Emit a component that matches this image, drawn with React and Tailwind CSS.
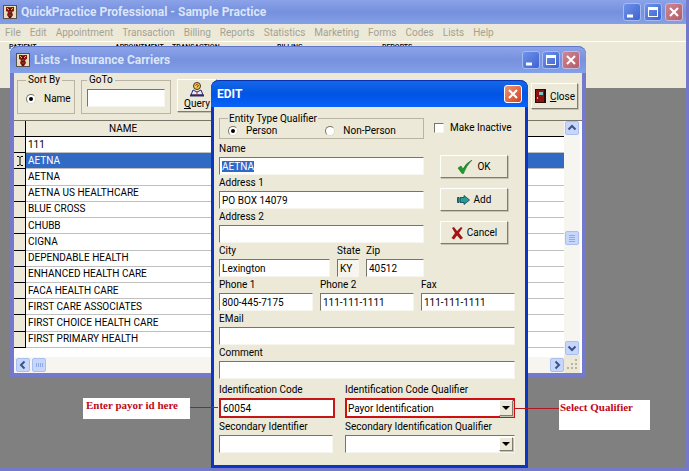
import React, { useEffect, useRef, useState } from "react";

const menuItems = [
  "File",
  "Edit",
  "Appointment",
  "Transaction",
  "Billing",
  "Reports",
  "Statistics",
  "Marketing",
  "Forms",
  "Codes",
  "Lists",
  "Help",
];

const carriers = [
  "111",
  "AETNA",
  "AETNA",
  "AETNA US HEALTHCARE",
  "BLUE CROSS",
  "CHUBB",
  "CIGNA",
  "DEPENDABLE HEALTH",
  "ENHANCED HEALTH CARE",
  "FACA HEALTH CARE",
  "FIRST CARE ASSOCIATES",
  "FIRST CHOICE HEALTH CARE",
  "FIRST PRIMARY HEALTH",
];

const sunken =
  "border border-t-[#77756a] border-l-[#77756a] border-r-[#f7f6ee] border-b-[#f7f6ee] bg-white";
const raised =
  "border border-t-white border-l-white border-r-[#807d6e] border-b-[#807d6e] bg-[#ece9d8] shadow-[1px_1px_0_#c5c2b2]";

function AppIcon() {
  return (
    <svg viewBox="0 0 14 14" className="h-3.5 w-3.5 shrink-0">
      <rect width="14" height="14" fill="#55504a" />
      <rect x="1" y="1" width="12" height="12" fill="#e8dcc0" />
      <path d="M3 2h3l1 1 1-1h3v4L9 7l1 3-2 3H6l-2-3 1-3-2-1z" fill="#8c1410" />
      <path d="M4 3l2 2M10 3L8 5M6 7h2M6 10h2" stroke="#e8b83c" />
      <path d="M7 2v11" stroke="#2a1210" />
    </svg>
  );
}

function CaptionButton({ kind, active }) {
  const isClose = kind === "Close";
  let color = "bg-linear-to-br from-[#6e93ea] to-[#3f62cf] border-[#a5baf0]";
  if (isClose) {
    color = active
      ? "bg-linear-to-br from-[#ee9272] to-[#d0401c] border-white"
      : "bg-linear-to-br from-[#cc8693] to-[#b45c68] border-[#c9b8dc]";
  }
  return (
    <button
      type="button"
      aria-label={kind}
      className={`flex h-[18px] w-[18px] items-center justify-center rounded-[3px] border ${color}`}
    >
      <svg viewBox="0 0 16 16" className="h-4 w-4" fill="none" stroke="white">
        {kind === "Minimize" && <path d="M3 12h6" strokeWidth="3" />}
        {kind === "Maximize" && (
          <>
            <rect x="3.5" y="3.5" width="9" height="9" />
            <path d="M3 4.5h10" strokeWidth="3" />
          </>
        )}
        {isClose && <path d="M4 4l8 8M12 4l-8 8" strokeWidth="2" />}
      </svg>
    </button>
  );
}

function ScrollButton({ label, d, thin }) {
  return (
    <button
      type="button"
      aria-label={label}
      className="flex h-3.5 w-3.5 shrink-0 items-center justify-center rounded-[2px] border border-[#a9bff0] bg-[#c6d6fc]"
    >
      <svg viewBox="0 0 10 10" className="h-2.5 w-2.5">
        <path
          d={d}
          fill="none"
          stroke={thin ? "#8fa9e8" : "#3f5484"}
          strokeWidth={thin ? 1 : 2}
        />
      </svg>
    </button>
  );
}

function Radio({ label, name, checked, onChange }) {
  return (
    <label className="flex items-center gap-2">
      <input
        type="radio"
        name={name}
        checked={checked}
        onChange={onChange}
        className="flex h-2.5 w-2.5 shrink-0 appearance-none items-center justify-center rounded-full border border-t-[#77756a] border-r-[#dedbc9] border-b-[#dedbc9] border-l-[#77756a] bg-white checked:before:h-1 checked:before:w-1 checked:before:rounded-full checked:before:bg-black"
      />
      {label}
    </label>
  );
}

function Field({ label, id, value, className, inputClass, inputRef }) {
  return (
    <div className={`flex flex-col ${className ?? ""}`}>
      <label htmlFor={id} className="h-4 leading-4 whitespace-nowrap">
        {label}
      </label>
      <input
        id={id}
        ref={inputRef}
        type="text"
        defaultValue={value}
        className={`w-full px-0.5 caret-transparent outline-none selection:bg-[#316ac5] selection:text-white ${
          inputClass ?? `h-[18px] ${sunken}`
        }`}
      />
    </div>
  );
}

function SelectField({ label, id, options, selectClass }) {
  return (
    <div className="flex flex-1 flex-col">
      <label htmlFor={id} className="h-4 leading-4 whitespace-nowrap">
        {label}
      </label>
      <div className="relative">
        <select
          id={id}
          className={`block w-full appearance-none px-px outline-none ${selectClass}`}
        >
          {options.map((option) => (
            <option key={option}>{option}</option>
          ))}
        </select>
        <span
          className={`pointer-events-none absolute inset-y-0.5 right-0.5 flex w-3.5 items-center justify-center ${raised}`}
        >
          <svg viewBox="0 0 8 4" className="h-1 w-2">
            <path d="M0 0h8L4 4z" fill="black" />
          </svg>
        </span>
      </div>
    </div>
  );
}

function ActionButton({ label, children }) {
  return (
    <button
      type="button"
      className={`flex h-[23px] w-[68px] items-center justify-center gap-1 ${raised}`}
    >
      {children}
      {label}
    </button>
  );
}

function CarrierList() {
  const [sortBy, setSortBy] = useState("Name");

  return (
    <section className="absolute top-[46px] left-2.5 flex h-[331px] w-[576px] flex-col rounded-t-lg border-4 border-t-0 border-[#7479cc] bg-[#ece9d8]">
      <header className="-mx-1 flex h-[27px] shrink-0 items-center gap-1 rounded-t-lg border-t border-[#6478c8] bg-linear-to-b from-[#8ba3e8] via-[#7791de] to-[#84a0e6] px-1.5">
        <AppIcon />
        <h2 className="flex-1 font-[Roboto,sans-serif] text-[12px] font-bold text-[#dbe5fa]">
          Lists - Insurance Carriers
        </h2>
        <div className="flex gap-0.5">
          <CaptionButton kind="Minimize" />
          <CaptionButton kind="Maximize" />
          <CaptionButton kind="Close" />
        </div>
      </header>

      <div className="flex h-[47px] shrink-0 items-start gap-1.5 pr-1 pl-[3px]">
        <fieldset className="h-[41px] w-[58px] min-w-0 border border-[#b9b5a2] px-2">
          <legend className="px-0.5 leading-[14px]">Sort By</legend>
          <div className="pt-1">
            <Radio
              label="Name"
              name="sort"
              checked={sortBy === "Name"}
              onChange={() => setSortBy("Name")}
            />
          </div>
        </fieldset>
        <fieldset className="h-[41px] w-[90px] min-w-0 border border-[#b9b5a2] px-[5px]">
          <legend className="px-0.5 leading-[14px]">GoTo</legend>
          <input
            type="text"
            aria-label="GoTo"
            className={`mt-0.5 block h-[18px] w-full ${sunken}`}
          />
        </fieldset>
        <button
          type="button"
          className={`mt-1.5 flex h-[33px] w-10 flex-col items-center justify-end ${raised}`}
        >
          <svg viewBox="0 0 16 15" className="h-[15px] w-4">
            <circle cx="8" cy="4" r="3.5" fill="#f2cf52" stroke="#3a3020" />
            <path d="M6.500 3.500q1.500-2 3 0L8 5.500" fill="none" stroke="#a02020" />
            <path d="M2 13l2-5 4 2 4-2 2 5z" fill="#e8e8f4" stroke="#28286c" />
            <path d="M1 13.500h14" stroke="#28286c" strokeWidth="2" />
            <path d="M8 9v4" stroke="#c03030" />
          </svg>
          <span className="leading-[14px]">
            <u>Q</u>uery
          </span>
        </button>
        <button
          type="button"
          className={`mt-2.5 ml-auto flex h-[26px] w-[47px] items-center justify-end gap-1 pr-0.5 ${raised}`}
        >
          <svg viewBox="0 0 11 14" className="h-3.5 w-[11px]">
            <rect width="11" height="14" fill="#2a0a08" />
            <rect x="1" y="1" width="8" height="12" fill="#8c1410" />
            <rect x="4" y="3" width="4" height="3" fill="#7cc4c8" />
            <rect x="2" y="8" width="1" height="2" fill="#e8c040" />
          </svg>
          <span>
            <u>C</u>lose
          </span>
        </button>
      </div>

      <div className="flex min-h-0 flex-1 border-t border-[#77756a] bg-white pr-0.5">
        <div className="flex flex-1 flex-col">
          <table className="h-[227px] w-full table-fixed border-separate border-spacing-0">
            <colgroup>
              <col className="w-3" />
              <col className="w-[194px]" />
              <col />
            </colgroup>
            <thead>
              <tr className="h-4 bg-[#ece9d8]">
                <th className="border-r border-b border-black p-0" />
                <th className="border-b border-black p-0 text-center leading-[14px] font-normal">
                  NAME
                </th>
                <th className="border-b border-black p-0" />
              </tr>
            </thead>
            <tbody>
              {carriers.map((carrier, i) => (
                <tr key={i} className={i === 1 ? "bg-[#316ac5] text-white" : ""}>
                  <td className="border-r border-b border-black bg-[#ece9d8] p-0 text-black">
                    {i === 1 && (
                      <svg viewBox="0 0 8 12" className="mx-auto h-3 w-2">
                        <path
                          d="M1 1.500h2l1 1 1-1h2M4 2v8M1 10.500h2l1-1 1 1h2"
                          fill="none"
                          stroke="black"
                        />
                      </svg>
                    )}
                  </td>
                  <td className="border-b border-[#c0c0c0] p-0 pl-0.5 leading-[14px] whitespace-nowrap">
                    {carrier}
                  </td>
                  <td className="border-b border-[#c0c0c0] p-0" />
                </tr>
              ))}
            </tbody>
          </table>
          <div className="mt-auto flex h-4 items-center gap-0.5 bg-[#f6f5f0] pl-0.5">
            <ScrollButton label="Scroll left" d="M6.500 1.500L3 5l3.500 3.500" />
            <ScrollButton label="Scroll thumb" d="M2.500 3v4M4.500 3v4M6.500 3v4M8.500 3v4" thin />
            <div className="flex-1" />
            <ScrollButton label="Scroll right" d="M3.500 1.500L7 5 3.500 8.500" />
          </div>
        </div>
        <div className="flex w-4 flex-col items-center bg-[#f6f5f0]">
          <ScrollButton label="Scroll up" d="M1.500 6.500L5 3l3.500 3.500" />
          <div className="flex-1" />
          <ScrollButton label="Scroll position" d="M2 2.500h6M2 4.500h6M2 6.500h6M2 8.500h6" thin />
          <div className="flex-1" />
          <ScrollButton label="Scroll down" d="M1.500 3.500L5 7l3.500-3.500" />
          <svg viewBox="0 0 16 18" className="h-[18px] w-4 bg-[#ece9d8]">
            <path
              d="M11 5h2M7 9h2M11 9h2M3 13h2M7 13h2M11 13h2"
              stroke="#b8b49c"
              strokeWidth="2"
            />
          </svg>
        </div>
      </div>
    </section>
  );
}

function EditDialog() {
  const [entityType, setEntityType] = useState("Person");
  const nameInput = useRef();

  useEffect(() => {
    nameInput.current.focus();
    nameInput.current.select();
  }, []);

  return (
    <form className="absolute top-20 left-[211px] flex h-[388px] w-[317px] flex-col rounded-t-lg border-[3px] border-t-0 border-[#0a36c0] bg-[#ece9d8]">
      <header className="-mx-[3px] flex h-[27px] shrink-0 items-center rounded-t-lg border-t border-[#0831b0] bg-linear-to-b from-[#1668e8] via-[#0054e3] to-[#0b62fa] px-1.5">
        <h2 className="flex-1 font-[Roboto,sans-serif] text-[12px] font-bold text-white">
          EDIT
        </h2>
        <CaptionButton kind="Close" active />
      </header>

      <div className="flex flex-col px-[5px] pt-[5px]">
        <div className="flex items-end gap-2.5">
          <fieldset className="h-[27px] w-[205px] border border-[#b9b5a2] px-2">
            <legend className="px-px leading-[13px]">Entity Type Qualifier</legend>
            <div className="flex gap-12 leading-[11px]">
              <Radio
                label="Person"
                name="entity"
                checked={entityType === "Person"}
                onChange={() => setEntityType("Person")}
              />
              <Radio
                label="Non-Person"
                name="entity"
                checked={entityType === "Non-Person"}
                onChange={() => setEntityType("Non-Person")}
              />
            </div>
          </fieldset>
          <label className="mb-1 flex items-center gap-1.5 whitespace-nowrap">
            <input
              type="checkbox"
              className={`h-2.5 w-2.5 appearance-none checked:bg-[#316ac5] ${sunken}`}
            />
            Make Inactive
          </label>
        </div>

        <div className="mt-0.5 flex gap-4">
          <div className="w-[205px]">
            <Field label="Name" id="name" value="AETNA" inputRef={nameInput} />
            <Field label="Address 1" id="address1" value="PO BOX 14079" />
            <Field label="Address 2" id="address2" />
            <div className="flex gap-[7px]">
              <Field label="City" id="city" value="Lexington" className="w-[111px]" />
              <Field
                label="State"
                id="state"
                value="KY"
                className="w-[22px]"
                inputClass="h-[18px] border border-t-[#77756a] border-l-[#77756a] border-r-[#f7f6ee] border-b-[#f7f6ee] bg-[#f6f5ee]"
              />
              <Field label="Zip" id="zip" value="40512" className="flex-1" />
            </div>
          </div>
          <div className="flex flex-col gap-2.5 pt-3.5">
            <ActionButton label="OK">
              <svg viewBox="0 0 16 14" className="h-3.5 w-4">
                <path d="M1 8l3-2 2 3q3-6 9-9Q9 6 6.500 13.500H5z" fill="#1f9a2c" stroke="#0c5c18" strokeWidth=".5" />
              </svg>
            </ActionButton>
            <ActionButton label="Add">
              <svg viewBox="0 0 13 10" className="h-2.5 w-[13px]">
                <path d="M.5 2.500h1.500v5H.5zM3 2.500h4V.5L12.500 5 7 9.500v-2H3z" fill="#2a9c98" stroke="#103c44" strokeWidth=".8" />
              </svg>
            </ActionButton>
            <ActionButton label="Cancel">
              <svg viewBox="0 0 12 14" className="h-3.5 w-3">
                <path d="M1 2l2-1 3 4 4-4 1.500 1L8 7l4 5-2.500 1.500L6 9.500l-3 4L.5 12 4 7z" fill="#a01414" />
              </svg>
            </ActionButton>
          </div>
        </div>

        <div className="mr-[5px]">
          <div className="flex gap-[7px]">
            <Field label="Phone 1" id="phone1" value="800-445-7175" className="flex-1" />
            <Field label="Phone 2" id="phone2" value="111-111-1111" className="flex-1" />
            <Field label="Fax" id="fax" value="111-111-1111" className="flex-1" />
          </div>
          <Field label="EMail" id="email" />
          <Field label="Comment" id="comment" />
          <div className="mt-[3px] flex gap-2.5">
            <Field
              label="Identification Code"
              id="idCode"
              value="60054"
              className="w-[116px]"
              inputClass="h-5 border-2 border-[#c41818] bg-white"
            />
            <SelectField
              label="Identification Code Qualifier"
              id="idQualifier"
              options={["Payor Identification"]}
              selectClass="h-5 border-2 border-[#d01010] bg-white"
            />
          </div>
          <div className="mt-px flex gap-2.5">
            <div className="w-[116px] pr-0.5">
              <Field label="Secondary Identifier" id="secondaryId" />
            </div>
            <SelectField
              label="Secondary Identification Qualifier"
              id="secondaryQualifier"
              options={[""]}
              selectClass={`h-[18px] ${sunken}`}
            />
          </div>
        </div>
      </div>
    </form>
  );
}

export default function App() {
  return (
    <div className="relative flex min-h-screen w-full flex-col overflow-hidden border-r-[3px] border-b-[3px] border-[#7479cc] bg-[#808080] font-[Roboto,Arial,sans-serif] text-[10px] text-black">
      <header className="flex h-6 items-center gap-1 bg-linear-to-b from-[#8aa2e8] via-[#7690dd] to-[#84a0e6] px-[3px]">
        <AppIcon />
        <h1 className="flex-1 font-[Roboto,sans-serif] text-[12px] font-bold text-[#dbe5fa]">
          QuickPractice Professional - Sample Practice
        </h1>
        <div className="flex gap-[3px]">
          <CaptionButton kind="Minimize" />
          <CaptionButton kind="Maximize" />
          <CaptionButton kind="Close" />
        </div>
      </header>
      <nav className="flex h-[18px] items-center gap-[9px] border-b border-white bg-[#ece9d8] px-[5px] text-[#a5a292]">
        {menuItems.map((item) => (
          <button key={item} type="button">
            {item}
          </button>
        ))}
      </nav>
      <div className="flex h-[46px] items-start bg-[#ece9d8] px-[9px] pt-px text-[7px] leading-[8px] font-medium">
        <span className="w-[106px]">PATIENT</span>
        <span className="w-[57px]">APPOINTMENT</span>
        <span className="w-[105px]">TRANSACTION</span>
        <span className="w-[105px]">BILLING</span>
        <span>REPORTS</span>
      </div>

      <CarrierList />
      <EditDialog />

      {/* callouts */}
      <div className="absolute top-[398px] left-[83px] flex items-start font-['Liberation_Serif',serif] text-[11px] font-bold text-[#c00818]">
        <p className="h-[21px] w-[107px] bg-white pl-[3px] leading-[14px]">
          Enter payor id here
        </p>
        <span className="mt-[9px] h-px w-7 bg-[#b01828]" />
      </div>
      <div className="absolute top-[400px] left-[515px] flex items-start font-['Liberation_Serif',serif] text-[11px] font-bold text-[#c00818]">
        <span className="mt-2 h-px w-11 bg-[#b01828]" />
        <p className="h-[30px] w-[91px] bg-white pl-px leading-[14px]">
          Select Qualifier
        </p>
      </div>
    </div>
  );
}
